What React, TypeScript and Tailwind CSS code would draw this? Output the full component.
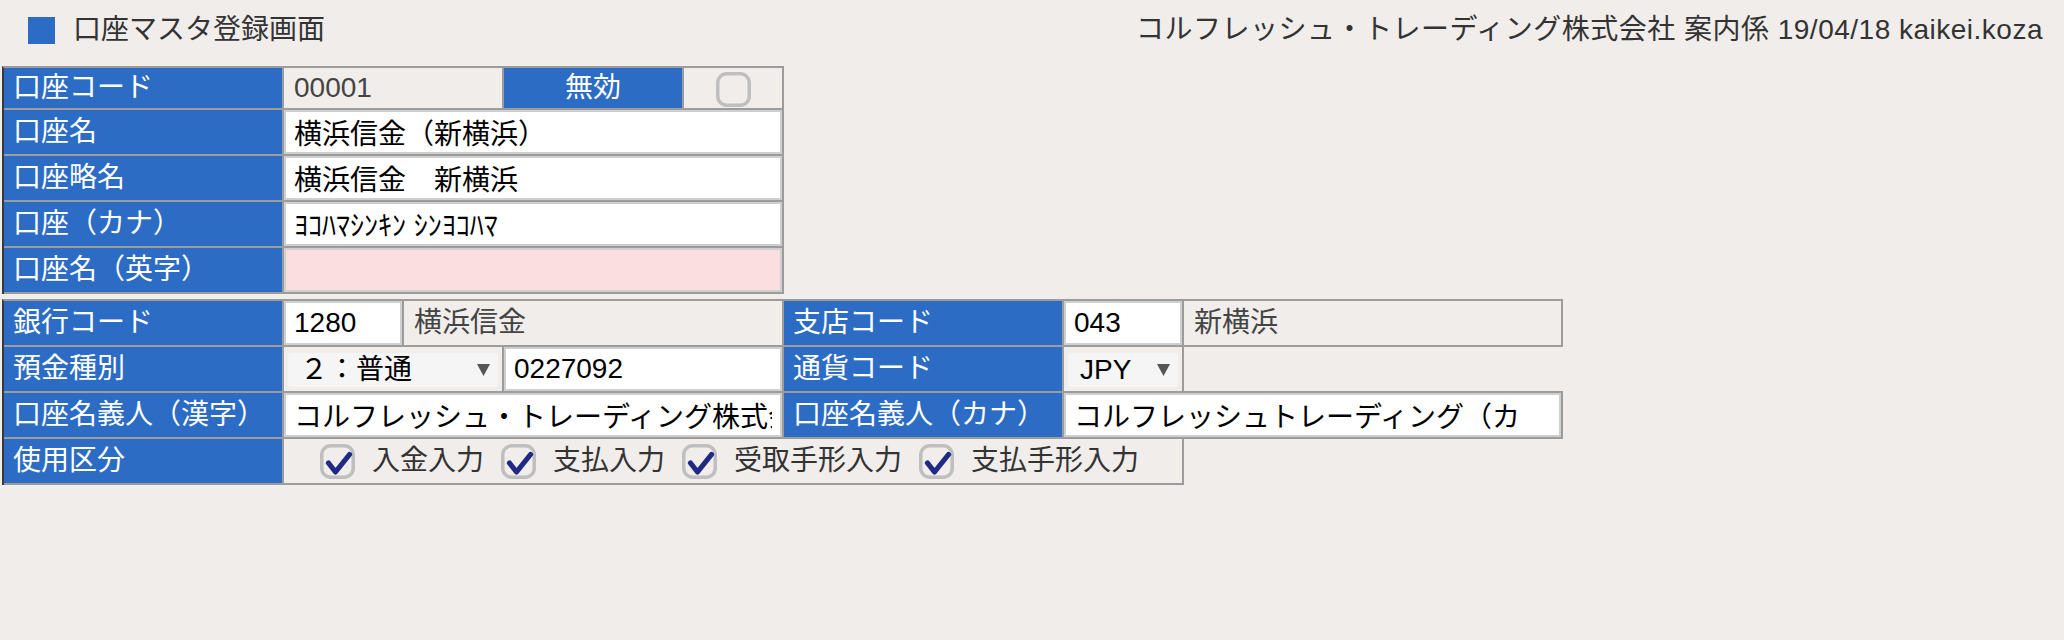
import React from "react";

// ---------------------------------------------------------------------------
// 口座マスタ登録画面
// ---------------------------------------------------------------------------

function Label({ children, className = "" }: { children: React.ReactNode; className?: string }) {
  return (
    <div
      className={`flex items-center border-r-2 border-b-2 border-[#9c9c9c] bg-[#2c6cc4] pl-[9px] whitespace-nowrap text-white ${className}`}
    >
      {children}
    </div>
  );
}

function Field({
  value,
  className = "",
  pink = false,
}: {
  value: string;
  className?: string;
  pink?: boolean;
}) {
  return (
    <div className={`border-r-2 border-b-2 border-[#9c9c9c] ${className}`}>
      <input
        readOnly
        defaultValue={value}
        className={`h-full w-full border-2 border-[#cfcfcf] px-2 text-black outline-none ${
          pink ? "bg-[#fbdedf]" : "bg-white"
        }`}
      />
    </div>
  );
}

function Caret() {
  return (
    <svg width="13" height="12" viewBox="0 0 13 12">
      <polygon points="0,0 13,0 6.5,12" fill="#555" />
    </svg>
  );
}

function Select({ value, className = "" }: { value: string; className?: string }) {
  return (
    <div className={`border-r-2 border-b-2 border-[#9c9c9c] px-[4px] pt-[6px] pb-[4px] ${className}`}>
      <div className="flex h-full items-center justify-between rounded-[3px] bg-[#f5f5f5] pr-[8px] pl-[12px] text-black">
        <span>{value}</span>
        <Caret />
      </div>
    </div>
  );
}

function CheckBox({ checked = false }: { checked?: boolean }) {
  return (
    <svg width="35" height="35" viewBox="0 0 35 35" className="shrink-0">
      <rect x="1.75" y="1.75" width="31.5" height="31.5" rx="9" fill="none" stroke="#bfbfbf" strokeWidth="3.5" />
      {checked && (
        <path
          d="M8.5 19 L15.5 28 L29.5 10.5"
          fill="none"
          stroke="#1e2a84"
          strokeWidth="5.2"
          strokeLinecap="round"
          strokeLinejoin="round"
        />
      )}
    </svg>
  );
}

const usage = ["入金入力", "支払入力", "受取手形入力", "支払手形入力"];

export default function App() {
  return (
    <div className="min-h-[640px] bg-[#f0edeb] font-['Liberation_Sans','Noto_Sans_CJK_JP',sans-serif] text-[28px] leading-none text-[#333]">
      {/* Header */}
      <header className="flex h-[60px] items-center justify-between pr-[21px] pl-[28px]">
        <div className="flex items-center gap-[18px]">
          <span className="h-[27px] w-[27px] bg-[#2c6cc4]" />
          <h1 className="text-[28px] font-normal">口座マスタ登録画面</h1>
        </div>
        <p className="tracking-[0.5px]">コルフレッシュ・トレーディング株式会社 案内係 19/04/18 kaikei.koza</p>
      </header>

      {/* 口座情報 */}
      <section className="mt-[6px] ml-[2px] grid w-max grid-cols-[280px_220px_180px_100px] grid-rows-[42px_46px_46px_46px_46px] border-t-2 border-l-2 border-t-[#9c9c9c] border-l-[#3a3a3a]">
        <Label>口座コード</Label>
        <div className="flex items-center border-r-2 border-b-2 border-[#9c9c9c] pl-[10px] text-[#444]">00001</div>
        <div className="flex items-center justify-center border-r-2 border-b-2 border-[#9c9c9c] bg-[#2c6cc4] text-white">
          無効
        </div>
        <div className="flex justify-center border-r-2 border-b-2 border-[#9c9c9c] pt-[4px]">
          <CheckBox />
        </div>

        <Label>口座名</Label>
        <Field value="横浜信金（新横浜）" className="col-span-3" />

        <Label>口座略名</Label>
        <Field value="横浜信金　新横浜" className="col-span-3" />

        <Label>口座（カナ）</Label>
        <Field value="ﾖｺﾊﾏｼﾝｷﾝ ｼﾝﾖｺﾊﾏ" className="col-span-3" />

        <Label>口座名（英字）</Label>
        <Field value="" pink className="col-span-3" />
      </section>

      {/* 銀行情報 */}
      <section className="mt-[5px] ml-[2px] grid w-max grid-cols-[280px_120px_100px_280px_280px_120px_379px] grid-rows-[46px_46px_46px_46px] border-t-2 border-l-2 border-t-[#9c9c9c] border-l-[#3a3a3a]">
        <Label>銀行コード</Label>
        <Field value="1280" />
        <div className="col-span-2 flex items-center border-r-2 border-b-2 border-[#9c9c9c] pl-[10px] text-[#444]">
          横浜信金
        </div>
        <Label>支店コード</Label>
        <Field value="043" />
        <div className="flex items-center border-r-2 border-b-2 border-[#9c9c9c] pl-[10px] text-[#444]">新横浜</div>

        <Label>預金種別</Label>
        <Select value="２：普通" className="col-span-2" />
        <Field value="0227092" />
        <Label>通貨コード</Label>
        <Select value="JPY" />
        <div className="border-b-2 border-[#9c9c9c]" />

        <Label>口座名義人（漢字）</Label>
        <Field value="コルフレッシュ・トレーディング株式会社" className="col-span-3" />
        <Label>口座名義人（カナ）</Label>
        <Field value="コルフレッシュトレーディング（カ" className="col-span-2" />

        <Label>使用区分</Label>
        <div className="col-span-5 flex items-center gap-[17px] border-r-2 border-b-2 border-[#9c9c9c] pl-[36px]">
          {usage.map((u) => (
            <label key={u} className="flex items-center gap-[17px]">
              <CheckBox checked />
              <span>{u}</span>
            </label>
          ))}
        </div>
      </section>
    </div>
  );
}
